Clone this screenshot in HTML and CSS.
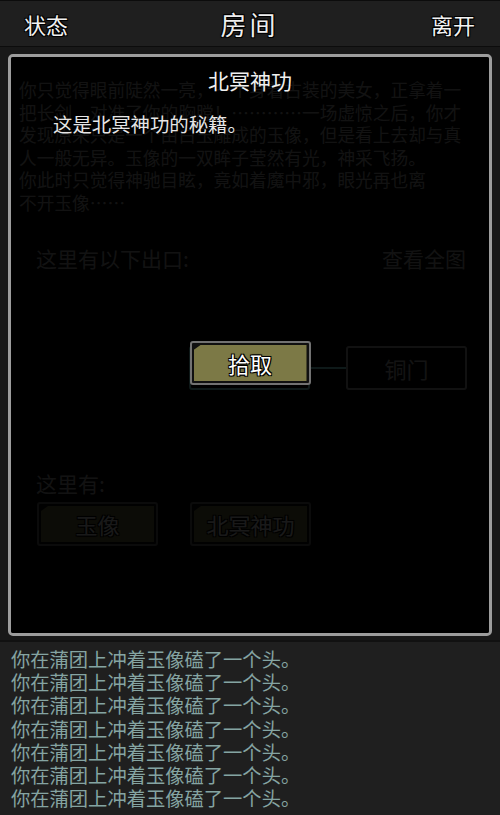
FILE: index.html
```html
<!DOCTYPE html>
<html lang="zh-CN">
<head>
    <meta charset="UTF-8">
    <meta name="viewport" content="width=device-width, initial-scale=1.0">
    <title>房间</title>
    <link rel="stylesheet" href="styles.css">
</head>
<body>
    <div class="topbar">
        <span class="nav-btn">状态</span>
        <span class="title">房间</span>
        <span class="nav-btn">离开</span>
    </div>

    <div class="stage">
        <div class="panel">
            <!-- 房间内容 -->
            <div class="room">
                <p class="desc">你只觉得眼前陡然一亮，一个身着古装的美女，正拿着一把长剑，对准了你的胸膛！…………一场虚惊之后，你才发现原来只是一个由白玉雕成的玉像，但是看上去却与真人一般无异。玉像的一双眸子莹然有光，神采飞扬。<br>你此时只觉得神驰目眩，竟如着魔中邪，眼光再也离<br>不开玉像……</p>
                <div class="exits-head">
                    <span>这里有以下出口:</span>
                    <span>查看全图</span>
                </div>
                <div class="map">
                    <div class="node current"></div>
                    <div class="link"></div>
                    <div class="node">铜门</div>
                </div>
                <div class="here-label">这里有:</div>
                <div class="items">
                    <div class="item-btn"><span>玉像</span></div>
                    <div class="item-btn"><span>北冥神功</span></div>
                </div>
            </div>

            <!-- 物品弹窗 -->
            <div class="dialog">
                <div class="dialog-title">北冥神功</div>
                <p class="dialog-desc">这是北冥神功的秘籍。</p>
                <div class="item-btn pick"><span>拾取</span></div>
            </div>
        </div>
    </div>

    <div class="log">
        <p>你在蒲团上冲着玉像磕了一个头。</p>
        <p>你在蒲团上冲着玉像磕了一个头。</p>
        <p>你在蒲团上冲着玉像磕了一个头。</p>
        <p>你在蒲团上冲着玉像磕了一个头。</p>
        <p>你在蒲团上冲着玉像磕了一个头。</p>
        <p>你在蒲团上冲着玉像磕了一个头。</p>
        <p>你在蒲团上冲着玉像磕了一个头。</p>
    </div>
</body>
</html>
```

FILE: styles.css
```css
body {
    margin: 0;
    height: 815px;
    overflow: hidden;
    display: flex;
    flex-direction: column;
    background: #171717;
    font-family: "Noto Sans CJK SC", "Noto Sans", sans-serif;
}

.topbar {
    height: 45px;
    display: flex;
    justify-content: space-between;
    align-items: center;
    padding: 0 25px 0 24px;
    background: #1f1f1f;
    border-top: 1px solid #0c0c0c;
    border-bottom: 1px solid #0c0c0c;
    color: #f2f2f2;
}

.nav-btn {
    font-size: 22px;
    text-shadow: 1px 1px 0 #000, -1px -1px 0 #000, 1px -1px 0 #000, -1px 1px 0 #000, 0 0 2px #000;
}

.topbar .title {
    font-size: 26px;
    letter-spacing: 3px;
    color: #eee;
    text-shadow: 1px 1px 0 #000, -1px -1px 0 #000, 1px -1px 0 #000, -1px 1px 0 #000, 0 0 2px #000;
}

.stage {
    padding: 7px 8px 4px;
    background: #181818;
}

.panel {
    position: relative;
    height: 582px;
    box-sizing: border-box;
    border: 3px solid #9d9d9d;
    border-radius: 5px;
    background: #000;
    overflow: hidden;
}

.room {
    padding-top: 21px;
    color: #b8b8b8;
}

.desc {
    margin: 0;
    padding: 0 20px 0 8px;
    font-size: 17.7px;
    line-height: 22.5px;
}

.exits-head {
    display: flex;
    justify-content: space-between;
    margin-top: 31px;
    padding: 0 23px 0 25px;
    font-size: 21px;
    line-height: 28px;
}

.map {
    display: flex;
    align-items: center;
    margin-top: 74px;
    padding-left: 178px;
}

.node {
    box-sizing: border-box;
    width: 121px;
    height: 44px;
    display: flex;
    justify-content: center;
    align-items: center;
    border: 2px solid #b0b0b0;
    border-radius: 3px;
    font-size: 22px;
    color: #c0c0c0;
}

.node.current {
    border-color: #8af8f8;
}

.link {
    width: 36px;
    height: 2px;
    background: #8af8f8;
}

.here-label {
    margin-top: 79px;
    padding-left: 25px;
    font-size: 21px;
    line-height: 28px;
}

.items {
    display: flex;
    gap: 32px;
    margin-top: 5px;
    padding-left: 26px;
}

.item-btn {
    box-sizing: border-box;
    width: 121px;
    height: 44px;
    display: flex;
    padding: 2px;
    border: 2px solid #727272;
    border-radius: 3px;
    background: #101010;
}

.item-btn span {
    flex: 1;
    display: flex;
    justify-content: center;
    align-items: center;
    background: #7c7946;
    clip-path: polygon(0 5px, 7px 0, 100% 0, 100% 100%, 0 100%);
    font-size: 22px;
    color: #fff;
    text-shadow: 1px 1px 0 #000, -1px -1px 0 #000, 1px -1px 0 #000, -1px 1px 0 #000, 0 0 2px #000;
}

.dialog {
    position: absolute;
    top: 0;
    left: 0;
    right: 0;
    bottom: 0;
    display: flex;
    flex-direction: column;
    padding-top: 9px;
    background: rgba(0, 0, 0, 0.9);
}

.dialog-title {
    text-align: center;
    font-size: 21px;
    line-height: 28px;
    color: #f0f0f0;
}

.dialog-desc {
    margin: 17px 0 0;
    padding-left: 42px;
    font-size: 19.4px;
    line-height: 26px;
    color: #e6e6e6;
    text-shadow: 0 0 2px #000;
}

.dialog .pick {
    align-self: center;
    margin-top: 204px;
}

.log {
    flex: 1;
    padding: 6px 11px 0;
    background: #1f1f1f;
    border-top: 2px solid #111;
}

.log p {
    margin: 0;
    font-size: 19.3px;
    line-height: 23.2px;
    color: #85a4a2;
}
```
